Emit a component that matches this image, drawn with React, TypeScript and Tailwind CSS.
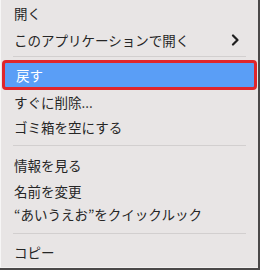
const ITEMS = [
  { type: 'item', label: '開く', h: 'h-[27px]' },
  { type: 'item', label: 'このアプリケーションで開く', h: 'h-[26px]', sub: true },
  { type: 'sep', h: 'h-[7px]' },
  { type: 'active', label: '戻す' },
  { type: 'item', label: 'すぐに削除...', h: 'h-[25px]' },
  { type: 'item', label: 'ゴミ箱を空にする', h: 'h-[24px]' },
  { type: 'sep', h: 'h-[12px]' },
  { type: 'item', label: '情報を見る', h: 'h-[28px]' },
  { type: 'item', label: '名前を変更', h: 'h-[24px]' },
  { type: 'item', label: '“あいうえお”をクイックルック', h: 'h-[22px]' },
  { type: 'sep', h: 'h-[16px]' },
  { type: 'item', label: 'コピー', h: 'h-[22px]' },
]

function Chevron() {
  return (
    <svg width="9" height="12" viewBox="0 0 9 12" className="mr-[18px]">
      <path d="M2 1.5 L6.5 6 L2 10.5" fill="none" stroke="#1f1f1f" strokeWidth="2.2" strokeLinecap="round" strokeLinejoin="round" />
    </svg>
  )
}

export default function App() {
  return (
    <div
      className="w-[260px] h-[270px] overflow-hidden bg-[#e8e5e5] border-r-[2px] border-b-[2px] border-[#4a4848] flex flex-col text-[13.5px] text-[#262626]"
      style={{ fontFamily: '"Noto Sans CJK JP", "Noto Sans", sans-serif' }}
    >
      <div className="flex-1 flex flex-col border-l border-[#f7f6f6] border-b border-b-[#f2f0f0]">
        {ITEMS.map((it, i) => {
          if (it.type === 'sep') {
            return (
              <div key={i} className={`${it.h} flex items-center px-[12px]`}>
                <div className="h-px w-full bg-[#d2cfcf]" />
              </div>
            )
          }
          if (it.type === 'active') {
            return (
              <div
                key={i}
                className="h-[30px] mx-[1px] rounded-[4px] border-[3px] border-[#e0262b] bg-[#5a9ef6] text-white flex items-center pl-[11px]"
              >
                {it.label}
              </div>
            )
          }
          return (
            <div key={i} className={`${it.h} flex items-center justify-between pl-[13px]`}>
              <span>{it.label}</span>
              {it.sub && <Chevron />}
            </div>
          )
        })}
      </div>
    </div>
  )
}
